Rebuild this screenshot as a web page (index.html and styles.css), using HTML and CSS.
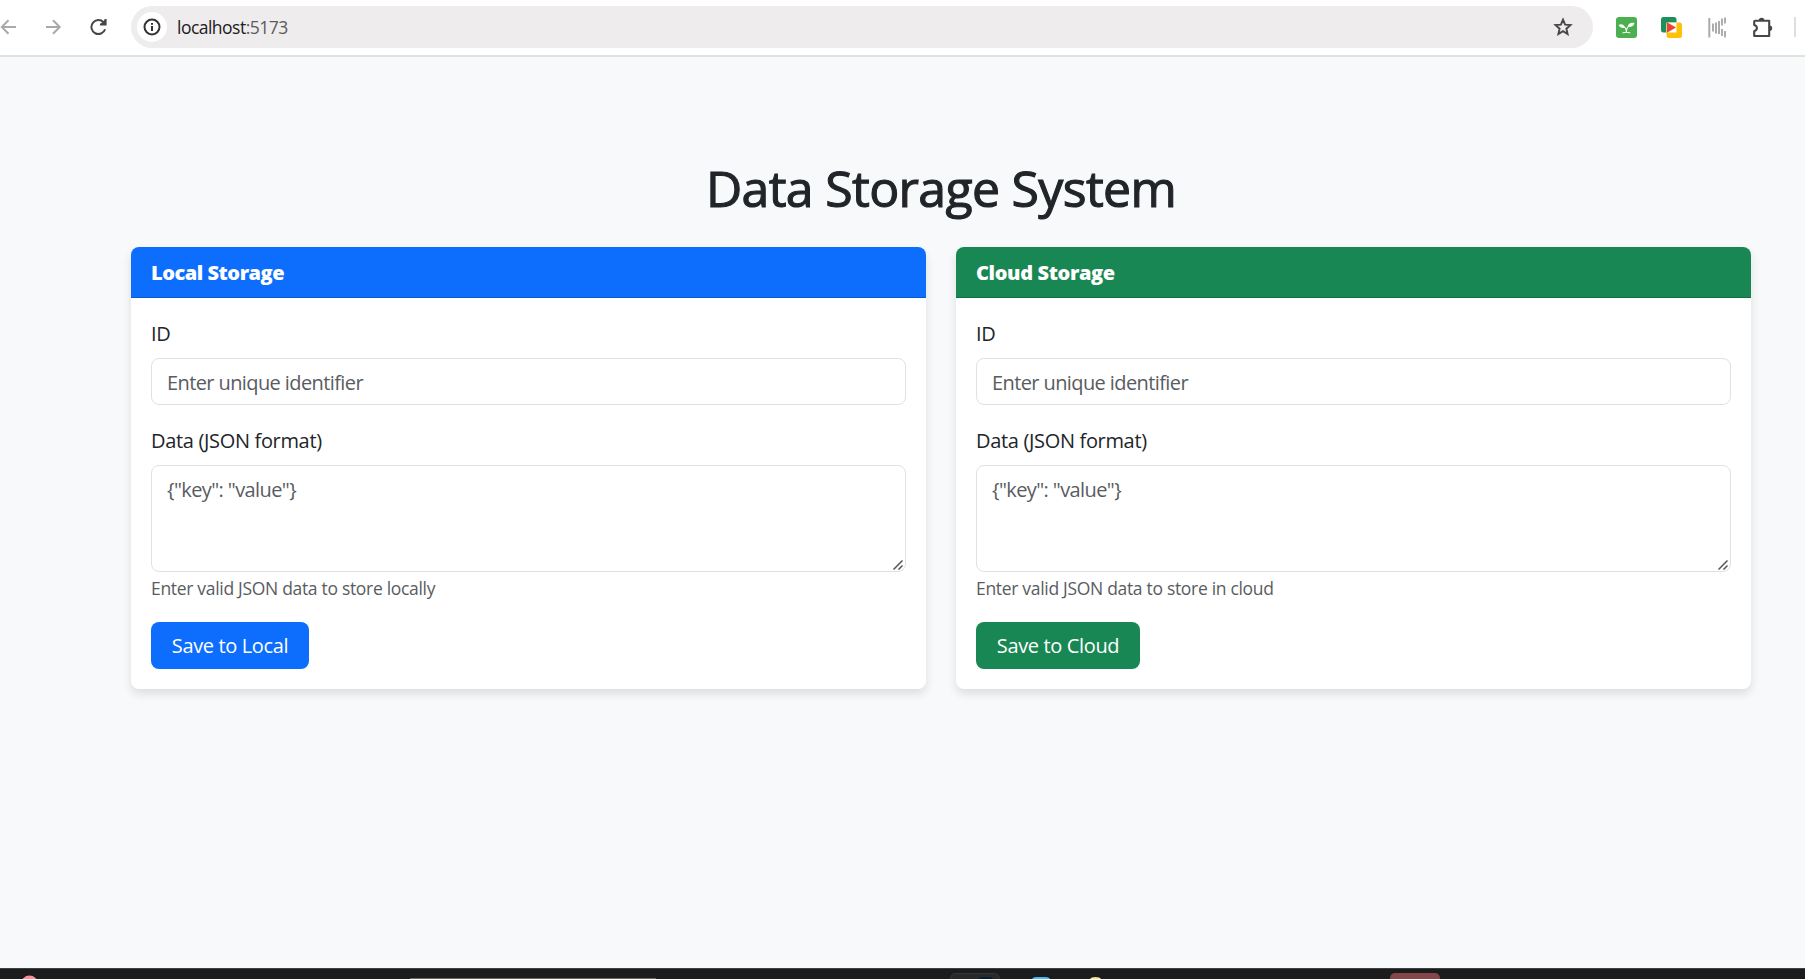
FILE: index.html
```
<!DOCTYPE html>
<html lang="en">
<head>
<meta charset="utf-8">
<title>Data Storage System</title>
<link rel="stylesheet" href="styles.css">
</head>
<body>
<header class="toolbar">
  <nav class="nav">
    <svg class="dim" width="17" height="20" viewBox="0 0 17 20"><path d="M16 10H2M8.5 3.2L1.8 10l6.7 6.8"/></svg>
    <svg class="dim" width="17" height="20" viewBox="0 0 17 20"><path d="M1 10h13.5M8 3.2l6.700 6.800L8 16.800"/></svg>
    <svg class="dark" width="18" height="20" viewBox="0 0 18 20"><path d="M15.100 12.200A7 7 0 1 1 13.500 5.200L15.300 7.200M10 7.400h5.600V2" /><path class="solid" d="M10 7.600L15.500 2v5.600z"/></svg>
  </nav>
  <div class="address">
    <span class="info"><svg width="18" height="18" viewBox="0 0 18 18"><circle cx="9" cy="9" r="7.5"/><path d="M9 8v5M9 5v1.8"/></svg></span>
    <span class="url">localhost<span class="port">:5173</span></span>
    <svg class="star" width="20" height="20" viewBox="0 0 20 20"><path d="M10 2.6l2.1 5 5.4.5-4.1 3.6 1.2 5.3-4.6-2.8-4.6 2.8 1.2-5.3-4.1-3.6 5.4-.5z"/></svg>
  </div>
  <div class="extensions">
    <svg width="21" height="21" viewBox="0 0 21 21"><rect width="21" height="21" rx="3" fill="#4caf50"/><path d="M2.500 8C5.500 6.500 8.300 7.800 9.200 10.800 6.300 11.500 4 10.500 2.500 8zM18.500 6c-.5 2.800-3 4.200-6.500 3.900C11.500 7.300 14.500 5.200 18.500 6z" fill="#fff"/><path d="M9 10.500q1.500 1.500 1.400 4.800M12.200 9.500q-1.800 2-1.800 5.500M6.500 15.900q3.900-1.300 7.800 0" fill="none" stroke="#fff" stroke-width="1.100"/></svg>
    <svg width="21" height="21" viewBox="0 0 21 21"><rect width="15.500" height="15.500" rx="2.500" fill="#1e8e5a"/><rect x="5.500" y="5.500" width="15.500" height="15.500" rx="2.500" fill="#ffc107"/><path d="M5.500 5.500h10v10h-10z" fill="#fff"/><path d="M6 5.300l9 5.200-9 5.300z" fill="#ea4335"/></svg>
    <svg class="bars" width="18" height="21" viewBox="0 0 18 21"><path d="M1.300 1v19.500M5 6.500v8M8 5.500v11M11 4v13" stroke="#ababab" stroke-width="2"/><path d="M14 1.500v7M14 12v7M17 .5v6M17 14v6.500" stroke="#ababab" stroke-width="1.900"/></svg>
    <svg class="puzzle" width="21" height="21" viewBox="0 0 21 21"><path d="M3.200 3.800H17.200V19H2.200V14.300C5.800 13.200 5.800 9 2.200 8V4.800q0-1 1-1z" fill="none" stroke="#474747" stroke-width="2.100" stroke-linejoin="round"/><path d="M6.800 3.500a2.800 2.800 0 0 1 5.600 0zM17.500 8.500a2.700 2.700 0 0 1 0 5.400z" fill="#474747"/></svg>
    <span class="divider"></span>
  </div>
</header>
<main class="page">
  <h1 class="title">Data Storage System</h1>
  <div class="columns">
    <section class="card">
      <h2 class="card-header local">Local Storage</h2>
      <form class="card-body">
        <label class="label" for="local-id">ID</label>
        <input class="control" id="local-id" placeholder="Enter unique identifier">
        <label class="label" for="local-data">Data (JSON format)</label>
        <div class="area-wrap">
          <textarea class="control area" id="local-data" placeholder='{"key": "value"}'></textarea>
          <svg class="grip" width="10" height="10" viewBox="0 0 10 10"><path d="M.5 9.500l9-9M5.500 9.500l4-4"/></svg>
        </div>
        <p class="hint">Enter valid JSON data to store locally</p>
        <button class="button local" type="button">Save to Local</button>
      </form>
    </section>
    <section class="card">
      <h2 class="card-header cloud">Cloud Storage</h2>
      <form class="card-body">
        <label class="label" for="cloud-id">ID</label>
        <input class="control" id="cloud-id" placeholder="Enter unique identifier">
        <label class="label" for="cloud-data">Data (JSON format)</label>
        <div class="area-wrap">
          <textarea class="control area" id="cloud-data" placeholder='{"key": "value"}'></textarea>
          <svg class="grip" width="10" height="10" viewBox="0 0 10 10"><path d="M.5 9.500l9-9M5.500 9.500l4-4"/></svg>
        </div>
        <p class="hint">Enter valid JSON data to store in cloud</p>
        <button class="button cloud" type="button">Save to Cloud</button>
      </form>
    </section>
  </div>
</main>
<footer class="taskbar">
  <svg width="1805" height="10" viewBox="0 0 1805 10">
    <circle cx="29.500" cy="15" r="8.500" fill="#ff8f96"/>
    <path d="M410 9.500H656" stroke="#6a6866"/>
    <rect x="950.500" y="4.500" width="49" height="20" rx="5" fill="#292929" stroke="#363636"/>
    <path d="M978 10q2-2 5-2h6q3 0 4 2z" fill="#071c33"/>
    <path d="M1032 10q1-2 4-2h10q3 0 4 2z" fill="#4cb9f5"/>
    <path d="M1090 10q1-2 5.500-2t5.500 2z" fill="#f2e58c"/>
    <rect x="1390" y="4" width="50" height="20" rx="5" fill="#854549"/>
  </svg>
</footer>
</body>
</html>
```
FILE: styles.css
```
* { box-sizing: border-box; }

body {
  margin: 0;
  height: 979px;
  overflow: hidden;
  display: flex;
  flex-direction: column;
  background: #f8f9fb;
  color: #212529;
  font: 400 20px/30px "Open Sans", "Noto Sans", sans-serif;
}

.toolbar {
  flex: none;
  height: 57px;
  padding-top: 6px;
  display: flex;
  align-items: flex-start;
  background: #fff;
  border-bottom: 2px solid #dfe1e2;
}

.nav {
  width: 131px;
  height: 42px;
  display: flex;
  align-items: center;
  gap: 28px;
}
.nav svg { fill: none; stroke-width: 2; flex: none; }
.nav .dim { stroke: #a9a9a9; }
.nav .dark { stroke: #474747; stroke-width: 2; }
.nav .solid { fill: #474747; stroke: none; }

.address {
  width: 1462px;
  height: 42px;
  padding: 0 20px 0 6px;
  display: flex;
  align-items: center;
  border-radius: 21px;
  background: #efeced;
}
.info {
  width: 30px;
  height: 30px;
  display: grid;
  place-items: center;
  border-radius: 50%;
  background: #fff;
}
.info svg { fill: none; stroke: #333; stroke-width: 2; }
.url {
  flex: 1;
  padding-left: 10px;
  font-size: 17.5px;
  letter-spacing: -0.52px;
  color: #202020;
}
.port { color: #5a5a5c; }
.star { fill: none; stroke: #474747; stroke-width: 1.9; }

.extensions {
  height: 42px;
  padding-left: 23px;
  display: flex;
  align-items: center;
  gap: 24px;
}
.bars { margin-left: 2px; }
.puzzle { margin-left: 2px; }
.divider { width: 2px; height: 20px; margin-left: -3px; background: #dedede; }

.page { flex: 1; padding: 101px 54px 0 131px; }
.title {
  margin: 0 0 29px;
  font-size: 50px;
  line-height: 60px;
  font-weight: 400;
  letter-spacing: -0.67px;
  text-align: center;
  -webkit-text-stroke: 1.1px #212529;
}
.columns { display: grid; grid-template-columns: 1fr 1fr; gap: 30px; }

.card {
  border-radius: 8px;
  background: #fff;
  box-shadow: 0 5px 10px rgba(0, 0, 0, 0.11);
}
.card-header {
  margin: 0;
  padding: 11px 20px 9px;
  border-bottom: 1px solid rgba(0, 0, 0, 0.18);
  border-radius: 8px 8px 0 0;
  color: #fff;
  font-size: 20px;
  font-weight: 800;
  letter-spacing: -0.46px;
}
.card-header.cloud { letter-spacing: -0.36px; }
.local { background-color: #0d6efd; }
.cloud { background-color: #198754; }

.card-body { padding: 21px 20px 20px; }
.label { display: block; margin-bottom: 9px; letter-spacing: -0.33px; }
.control {
  display: block;
  width: 100%;
  height: 47px;
  margin: 0 0 21px;
  padding: 9px 15px 7px;
  border: 1px solid #dee2e6;
  border-radius: 8px;
  background: #fff;
  color: #212529;
  font: inherit;
  letter-spacing: -0.6px;
}
.control::placeholder { color: #595c5f; opacity: 1; }
.area-wrap { position: relative; }
.area { height: 107px; margin: 0; resize: none; }
.grip {
  position: absolute;
  right: 3px;
  bottom: 2px;
  fill: none;
  stroke: #555;
  stroke-width: 1.5;
}
.hint {
  margin: 3px 0 21px;
  font-size: 17.5px;
  line-height: 26px;
  letter-spacing: -0.31px;
  color: #595c5f;
}
.button {
  display: block;
  height: 47px;
  padding: 1px 0 0;
  border: 0;
  border-radius: 8px;
  color: #fff;
  font: inherit;
  letter-spacing: -0.36px;
}
.button.local { width: 158px; }
.button.cloud { width: 164px; }

.taskbar {
  flex: none;
  height: 11px;
  overflow: hidden;
  background: #1c1c1c;
  border-top: 1px solid #3b4042;
}
.taskbar svg { display: block; }
```
